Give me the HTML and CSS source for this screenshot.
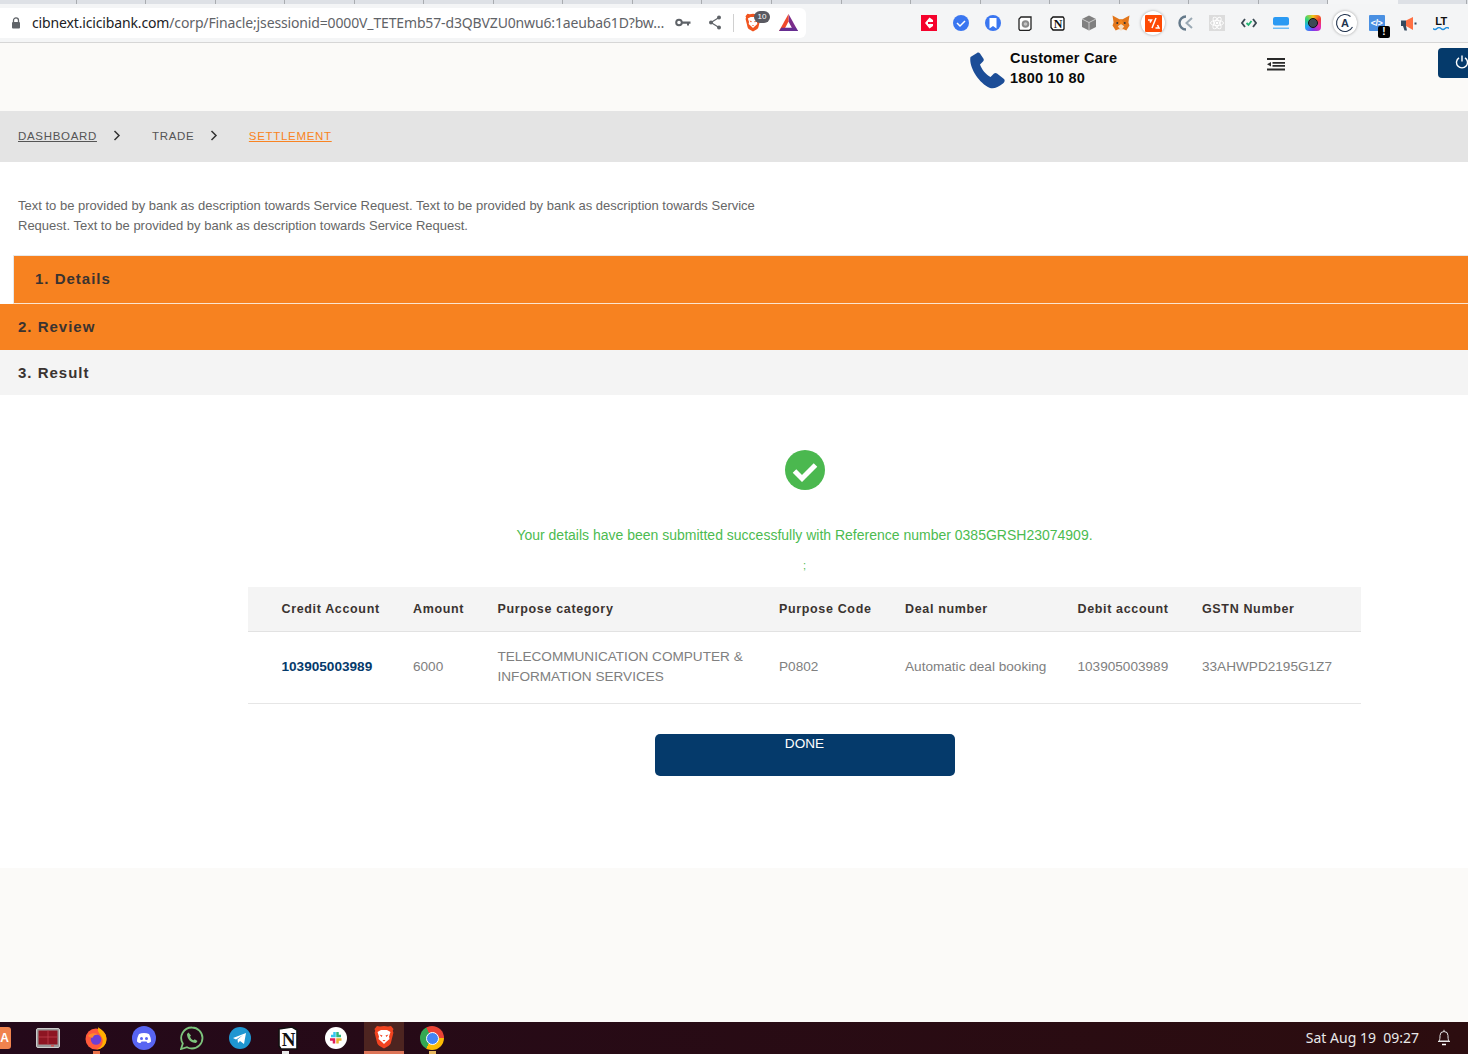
FILE: index.html
```html
<!DOCTYPE html>
<html lang="en">
<head>
<meta charset="utf-8">
<title>Settlement</title>
<link rel="stylesheet" href="styles.css">
</head>
<body>
<div class="screen">
  <div class="tabstrip">
    <i class="tab first"></i><i class="tab"></i><i class="tab"></i><i class="tab"></i><i class="tab"></i><i class="tab"></i><i class="tab"></i><i class="tab"></i><i class="tab"></i><i class="tab"></i><i class="tab"></i><i class="tab"></i><i class="tab"></i><i class="tab"></i><i class="tab"></i><i class="tab"></i><i class="tab"></i><i class="tab"></i><i class="tab"></i><i class="tab active"></i><i class="tab"></i>
  </div>
  <div class="toolbar">
    <div class="omnibox">
      <svg class="lock" width="10" height="12" viewBox="0 0 10 12"><path d="M2.500 5V3.400a2.500 2.500 0 0 1 5 0V5" fill="none" stroke="#5f6368" stroke-width="1.300"/><rect x="1" y="5" width="8" height="6.500" rx="1" fill="#5f6368"/></svg>
      <div class="url"><span class="host">cibnext.icicibank.com</span>/corp/Finacle;jsessionid=0000V_TETEmb57-d3QBVZU0nwu6:1aeuba61D?bw…</div>
      <svg class="key" width="16" height="9" viewBox="0 0 16 9"><circle cx="4" cy="4.500" r="2.800" fill="none" stroke="#5f6368" stroke-width="2"/><path d="M7 3.400h8.500v2.400H14v1.600h-2V5.800H7z" fill="#5f6368"/></svg>
      <svg class="share" width="14" height="15" viewBox="0 0 14 15"><path d="M11 2.500 3 7.500l8 5" fill="none" stroke="#5f6368" stroke-width="1.200"/><circle cx="11" cy="2.500" r="2" fill="#5f6368"/><circle cx="3" cy="7.500" r="2" fill="#5f6368"/><circle cx="11" cy="12.500" r="2" fill="#5f6368"/></svg>
      <span class="omni-sep"></span>
      <div class="brave-wrap">
        <svg width="16" height="19" viewBox="0 0 20 24"><path d="M10 1 14 1.500l3-.5 2.500 3-.7 1.700.6 2-2.500 10c-.3 1.500-1.200 2.300-2.500 3.200L10 23.500l-4.400-2.600c-1.300-.9-2.200-1.700-2.500-3.200L.6 7.700l.6-2L.5 4 3 1l3 .5z" fill="#f1541f"/><path d="M3.500 7 7 5h6l3.500 2-1.500 4.500.5 2.500L12 17l-2 2-2-2-3.500-3 .5-2.500z" fill="#fff"/><path d="M5.500 9.500 8.500 10.500 7.500 12zM14.500 9.500 11.500 10.500 12.500 12zM8.500 15h3L10 16.500z" fill="#f1541f"/></svg>
        <span class="count">10</span>
      </div>
      <svg class="tri" width="19" height="17" viewBox="0 0 19 17"><path d="M9.500 0 19 17h-4.500L9.500 7.500z" fill="#7b2d8b"/><path d="M9.500 0 0 17h4.500L9.500 7.500z" fill="#f0482c"/><path d="M0 17h19l-2.300-3.300H2.300z" fill="#662d91"/></svg>
    </div>
    <div class="exts">
      <span class="ext"><svg width="16" height="16" viewBox="0 0 16 16"><rect width="16" height="16" fill="#f5022c"/><path d="M8.500 2.500 4 8l4.500 5.500 3.500-2.500v-2H9.500L8 8l1.500-1H12V5z" fill="#fff"/><path d="M7 7h2v2H7z" fill="#f5022c"/></svg></span>
      <span class="ext"><svg width="16" height="16" viewBox="0 0 16 16"><circle cx="8" cy="8" r="8" fill="#3a76f0"/><path d="m4 8 3 3 5-5" fill="none" stroke="#fff" stroke-width="1.500"/></svg></span>
      <span class="ext"><svg width="16" height="16" viewBox="0 0 16 16"><circle cx="8" cy="8" r="8" fill="#3a76f0"/><path d="M4.500 3h7v10.500L8 11l-3.500 2.500z" fill="#fff"/></svg></span>
      <span class="ext"><svg width="14" height="15" viewBox="0 0 14 15"><path d="M3 1h10v12l-2 1.500H2L1 13V3z" fill="#fff" stroke="#222" stroke-width="1.300"/><circle cx="7.500" cy="8" r="3.800" fill="#8a8a8a"/><circle cx="7.500" cy="8" r="1.800" fill="#c4c4c4"/></svg></span>
      <span class="ext"><svg width="15" height="15" viewBox="0 0 15 15"><path d="M3 1h10l1 1.500V13l-1 1H3l-2-2.500V3z" fill="#fff" stroke="#111" stroke-width="1.300"/><text x="8" y="11.500" class="svg-n">N</text></svg></span>
      <span class="ext"><svg width="16" height="16" viewBox="0 0 16 16"><path d="m8 .5 7 3.500v8l-7 3.500L1 12V4z" fill="#808080"/><path d="M1 4l7 3.500L15 4M8 7.500v8" fill="none" stroke="#dcdcdc" stroke-width=".8"/></svg></span>
      <span class="ext"><svg width="18" height="17" viewBox="0 0 17 16"><path d="M.5.500 7 4h3L16.500.500l-1 6.500 1 3-3 4.500-2.500-1H6l-2.500 1-3-4.500 1-3z" fill="#e2761b"/><path d="M5.500 10.500 8.500 15l3-4.500-3-2z" fill="#f6dcc0"/><path d="M8.500 4 5 9l3.500-.5L12 9z" fill="#f6851b"/><circle cx="5" cy="7.500" r="1" fill="#333"/><circle cx="12" cy="7.500" r="1" fill="#333"/></svg></span>
      <span class="ext halo"><svg width="17" height="17" viewBox="0 0 17 17"><rect width="17" height="17" rx="1" fill="#fe4a04"/><path d="M3 5h3.500L5 7.500M11 3 7 13M10.500 13H14l-1.500-3" fill="none" stroke="#fff" stroke-width="1.500"/></svg></span>
      <span class="ext"><svg width="15" height="16" viewBox="0 0 15 16"><path d="M8 1.500a6.500 6.500 0 0 0 0 13" fill="none" stroke="#64798a" stroke-width="2.400"/><path d="M14 3 8.500 8l5.500 5" fill="none" stroke="#9aa9b4" stroke-width="2"/></svg></span>
      <span class="ext"><svg width="16" height="16" viewBox="0 0 16 16"><rect width="16" height="16" fill="#dcdcdc"/><g fill="none" stroke="#fff" stroke-width=".9"><ellipse cx="8" cy="8" rx="6.500" ry="2.600"/><ellipse cx="8" cy="8" rx="6.500" ry="2.600" transform="rotate(60 8 8)"/><ellipse cx="8" cy="8" rx="6.500" ry="2.600" transform="rotate(120 8 8)"/></g><circle cx="8" cy="8" r="1.300" fill="#fff"/></svg></span>
      <span class="ext"><svg width="16" height="10" viewBox="0 0 16 10"><path d="M4 1 1 5l3 4M12 1l3 4-3 4" fill="none" stroke="#3c4a54" stroke-width="1.800"/><path d="m5.500 5 2 2 3-4" fill="none" stroke="#22b573" stroke-width="1.800"/></svg></span>
      <span class="ext"><svg width="16" height="12" viewBox="0 0 16 12"><rect width="16" height="8.500" rx="2" fill="#2b9af3"/><rect y="10.500" width="16" height="1.500" fill="#6cbcf7"/></svg></span>
      <span class="ext"><span class="rainbow"><span class="lens"></span></span></span>
      <span class="ext halo"><svg width="20" height="20" viewBox="0 0 20 20"><path d="M15.500 3.500A8.500 8.500 0 1 0 17.500 14" fill="none" stroke="#22344f" stroke-width="1.100"/><text x="10" y="14" class="svg-a">A</text></svg></span>
      <span class="ext"><span class="devbox">&lt;/&gt;</span><span class="warn">!</span></span>
      <span class="ext"><svg width="16" height="15" viewBox="0 0 16 15"><path d="M0 4.500h5V10H0z" fill="#34495e"/><path d="M2 10h3l1 4.500H3.500z" fill="#34495e"/><path d="M5 4.500 12 1v13L5 10z" fill="#ff7043"/><rect x="13.500" y="6.500" width="2" height="2" fill="#34495e"/></svg></span>
      <span class="ext lt"><span class="lt-t">LT</span><svg width="16" height="4" viewBox="0 0 16 4"><path d="M0 1.500q2 2 4 0t4 0 4 0 4 0" fill="none" stroke="#1f8fe0" stroke-width="1.400"/></svg></span>
      <span class="ext dots"><i></i><i></i></span>
    </div>
  </div>

  <header class="site-head">
    <svg class="phone" width="37" height="37" viewBox="0 0 37 37"><path d="M8 1 1.500 5C-.5 14 9 31 21 36c4 1 8-.5 13-4.500 2-1.800 2-3.500 1-4.500L28 21.500c-1-.8-2-.8-3 0l-3.500 3.500C17 23 12.500 17 11 12.500L14 9.500c.8-.8 1-1.800.5-2.800L11 1.500C10 .3 9 .3 8 1z" fill="#1c4d97"/></svg>
    <div class="care"><div>Customer Care</div><div>1800 10 80</div></div>
    <svg class="menu" width="18" height="14" viewBox="0 0 18 14"><path d="M0 1h18v2H0zM5.500 5H18v1.800H5.500zM5.500 8H18v1.800H5.500zM0 11.500h18v2H0z" fill="#2a2a2a"/><path d="M0 7.300 4 5v4.600z" fill="#2a2a2a"/></svg>
    <div class="power"><svg width="14" height="14" viewBox="0 0 14 14"><path d="M4 2.800a5.500 5.500 0 1 0 6 0" fill="none" stroke="#fff" stroke-width="1.400"/><path d="M7 .5v6" stroke="#fff" stroke-width="1.400"/></svg></div>
  </header>

  <nav class="crumbs">
    <a class="crumb link w-a">DASHBOARD</a>
    <svg class="chev" width="8" height="11" viewBox="0 0 8 11"><path d="m1.500 1 4.500 4.500L1.500 10" fill="none" stroke="#333" stroke-width="1.500"/></svg>
    <span class="crumb w-b">TRADE</span>
    <svg class="chev" width="8" height="11" viewBox="0 0 8 11"><path d="m1.500 1 4.500 4.500L1.500 10" fill="none" stroke="#333" stroke-width="1.500"/></svg>
    <a class="crumb link current">SETTLEMENT</a>
  </nav>

  <main class="content">
    <p class="intro">Text to be provided by bank as description towards Service Request. Text to be provided by bank as description towards Service Request. Text to be provided by bank as description towards Service Request.</p>
    <div class="step step-one">1. Details</div>
    <div class="step step-two">2. Review</div>
    <div class="step step-three">3. Result</div>

    <section class="result">
      <svg class="ok" width="40" height="40" viewBox="0 0 40 40"><circle cx="20" cy="20" r="20" fill="#4bb84f"/><path d="m9.500 21 7.500 7.500L30.500 15" fill="none" stroke="#fff" stroke-width="5"/></svg>
      <p class="msg">Your details have been submitted successfully with Reference number 0385GRSH23074909.</p>
      <p class="semi">;</p>
      <table class="grid">
        <colgroup>
          <col class="c1"><col class="c2"><col class="c3"><col class="c4"><col class="c5"><col class="c6"><col class="c7">
        </colgroup>
        <thead>
          <tr><th>Credit Account</th><th>Amount</th><th>Purpose category</th><th>Purpose Code</th><th>Deal number</th><th>Debit account</th><th>GSTN Number</th></tr>
        </thead>
        <tbody>
          <tr><td class="acct">103905003989</td><td>6000</td><td>TELECOMMUNICATION COMPUTER &amp; INFORMATION SERVICES</td><td>P0802</td><td>Automatic deal booking</td><td>103905003989</td><td>33AHWPD2195G1Z7</td></tr>
        </tbody>
      </table>
      <button class="done">DONE</button>
    </section>
  </main>

  <div class="page-foot"></div>

  <footer class="taskbar">
    <div class="apps">
      <span class="app app-cut"><span class="soft">A</span></span>
      <span class="app"><svg width="24" height="20" viewBox="0 0 24 20"><rect x=".5" y=".5" width="23" height="19" rx="1.500" fill="#9a9a9a" stroke="#ccc"/><rect x="2.500" y="2.500" width="19" height="14" fill="#8d1522"/><path d="M2.500 9h19M12 2.500v14" stroke="#c0404c" stroke-width=".8"/><rect x="15" y="17.400" width="3" height="1" fill="#e33"/></svg></span>
      <span class="app"><svg width="22" height="24" viewBox="0 0 22 24"><circle cx="11" cy="13" r="10.500" fill="#ff5a3c"/><path d="M13 1c4 3 8.500 6 8.500 12 0 6-4.500 10.500-10.500 10.500 5-1.500 7.500-6 6.500-10.500-.7-3-3.500-5-4.500-8 0-1.500 0-3 .5-4z" fill="#ffb000"/><circle cx="11" cy="13.500" r="5.200" fill="#6b3fd4"/><path d="M3 10c2-3 7-3.500 10-1.500-3 0-5 1-5 3-2 .5-4-.5-5-1.500z" fill="#ff8a2c"/></svg><i class="dot orange"></i></span>
      <span class="app"><svg width="24" height="24" viewBox="0 0 24 24"><circle cx="12" cy="12" r="12" fill="#5865f2"/><path d="M7 8c3-1.500 7-1.500 10 0 1.500 2.500 2 5 2 7.500-1 1-2.500 1.500-3.500 1.500l-1-1.500h-5L8.500 17c-1 0-2.500-.5-3.500-1.500C5 13 5.500 10.500 7 8z" fill="#fff"/><circle cx="9.500" cy="12.500" r="1.500" fill="#5865f2"/><circle cx="14.500" cy="12.500" r="1.500" fill="#5865f2"/></svg></span>
      <span class="app"><svg width="24" height="24" viewBox="0 0 24 24"><path d="M12 1.500a10.500 10.500 0 0 1 0 21c-2 0-3.500-.5-5-1.300L1 23l1.800-5.500A10.500 10.500 0 0 1 12 1.500z" fill="none" stroke="#7dc47c" stroke-width="1.800"/><path d="M8.500 6.500 7 8c0 5 4 9 9 9l1.500-2-2.800-1.800-1.200 1c-1.500-.5-3-2-3.500-3.500l1-1.200z" fill="#7dc47c"/></svg></span>
      <span class="app"><svg width="22" height="22" viewBox="0 0 22 22"><circle cx="11" cy="11" r="11" fill="#1f96d1"/><path d="M4 11 17 6l-2 11-4-3-2 2-.5-3.500L14 8l-7 4.500z" fill="#fff"/></svg></span>
      <span class="app"><svg width="20" height="24" viewBox="0 0 20 24"><path d="M1 3 14 1l5 3v19H3l-2-3z" fill="#fff" stroke="#111" stroke-width="1.600"/><text x="10.500" y="20" class="svg-bign">N</text></svg><i class="dot white"></i></span>
      <span class="app"><svg width="22" height="22" viewBox="0 0 22 22"><circle cx="11" cy="11" r="11" fill="#fff"/><path d="M9.500 5v4H6" stroke="#36c5f0" stroke-width="2.500" fill="none"/><path d="M12.500 5v4h3.500" stroke="#2eb67d" stroke-width="2.500" fill="none"/><path d="M5 12.500h4v4" stroke="#e01e5a" stroke-width="2.500" fill="none"/><path d="M16.500 12.500h-4v4" stroke="#ecb22e" stroke-width="2.500" fill="none"/></svg></span>
      <span class="app app-on"><svg width="20" height="24" viewBox="0 0 20 24"><path d="M10 1 14 1.500l3-.5 2.500 3-.7 1.700.6 2-2.500 10c-.3 1.500-1.200 2.300-2.500 3.200L10 23.500l-4.400-2.600c-1.300-.9-2.200-1.700-2.500-3.200L.6 7.700l.6-2L.5 4 3 1l3 .5z" fill="#f1431f"/><path d="M3.500 7 7 5h6l3.500 2-1.500 4.500.5 2.500L12 17l-2 2-2-2-3.500-3 .5-2.500z" fill="#fff"/><path d="M5.500 9.500 8.500 10.500 7.500 12zM14.500 9.500 11.500 10.500 12.500 12zM8.500 15h3L10 16.500z" fill="#f1431f"/></svg></span>
      <span class="app"><span class="chrome"><span class="chrome-in"></span></span><i class="dot amber"></i></span>
    </div>
    <div class="tray">
      <span class="clock">Sat Aug 19&nbsp; 09:27</span>
      <svg width="14" height="17" viewBox="0 0 14 17"><path d="M7 .8v1.200M2 12c1-1.500 1-3.500 1-5.500a4 4 0 0 1 8 0c0 2 0 4 1 5.500z" fill="none" stroke="#e8e8e8" stroke-width="1"/><path d="M1 12.500h12" stroke="#e8e8e8" stroke-width="1"/><path d="M5 15.500h4" stroke="#fff" stroke-width="1.500"/></svg>
    </div>
  </footer>
</div>
</body>
</html>
```
FILE: styles.css
```css
* { box-sizing: border-box; }
html, body { margin: 0; padding: 0; }
body { font-family: "Liberation Sans", Arial, sans-serif; background: #fff; overflow: hidden; }
.screen { width: 1468px; height: 1054px; display: flex; flex-direction: column; overflow: hidden; }

/* Browser chrome */
.tabstrip { height: 4px; background: #dee1e6; display: flex; flex: none; }
.tab { display: block; flex: none; width: 69.55px; border-right: 1px solid #a9acb0; }
.tab.first { width: 76.5px; }
.tab.active { background: #f5f6f7; border-right: 0; }
.toolbar { height: 39px; flex: none; background: #f4f5f6; border-bottom: 1px solid #d6d6d6; display: flex; align-items: center; }
.omnibox { width: 806px; height: 30px; background: #fff; border-radius: 0 6px 6px 0; display: flex; align-items: center; flex: none; padding-left: 11px; margin-top: -1px; }
.lock { flex: none; }
.url { font-family: "Noto Sans", sans-serif; font-size: 14px; color: #5f6368; margin-left: 11px; width: 632px; white-space: nowrap; flex: none; letter-spacing: -0.145px; }
.host { color: #202124; }
.key { margin-left: 11px; flex: none; }
.share { margin-left: 17px; flex: none; }
.omni-sep { width: 1px; height: 18px; background: #d0d0d0; margin-left: 11px; flex: none; }
.brave-wrap { position: relative; display: flex; margin-left: 11px; width: 24px; flex: none; }
.count { position: absolute; left: 9px; top: -2px; width: 16px; height: 12px; border-radius: 6px; background: #5a5a62; color: #fff; font-size: 8px; line-height: 12px; text-align: center; }
.tri { margin-left: 10px; flex: none; }
.exts { display: flex; margin-left: 107px; flex: none; }
.ext { width: 32px; height: 32px; display: flex; flex-direction: column; align-items: center; justify-content: center; position: relative; flex: none; }
.halo::before { content: ""; position: absolute; left: 4px; top: 4px; width: 24px; height: 24px; border-radius: 50%; background: #fff; box-shadow: 0 0 3px rgba(0,0,0,.35); }
.halo svg { position: relative; }
.svg-n { font: 700 12px "Liberation Serif", serif; text-anchor: middle; fill: #111; }
.svg-bign { font: 700 19px "Liberation Serif", serif; text-anchor: middle; fill: #111; }
.svg-a { font: 700 11px "Liberation Sans", sans-serif; text-anchor: middle; fill: #22344f; }
.rainbow { width: 16px; height: 16px; border-radius: 4px; background: conic-gradient(#f5c518, #f0412f, #e52bb6, #7a3df0, #1fa8f5, #2ed47a, #f5c518); display: flex; align-items: center; justify-content: center; }
.lens { width: 10px; height: 10px; border-radius: 50%; background: #3d4a55; border: 1px solid #111; }
.devbox { width: 16px; height: 16px; border-radius: 1px; background: #4a90e2; color: #fff; font-size: 9px; font-weight: 700; line-height: 16px; text-align: center; margin: -1px 0 0 -1px; letter-spacing: -0.5px; }
.warn { position: absolute; left: 17px; top: 19px; width: 12px; height: 12px; border-radius: 2px; background: #000; color: #fff; font-size: 10px; font-weight: 700; line-height: 12px; text-align: center; }
.lt-t { font-size: 11px; font-weight: 700; line-height: 10px; color: #111; letter-spacing: -0.5px; }
.lt svg { margin-top: 1px; }
.dots { gap: 3px; align-items: flex-start; padding-left: 11px; }
.dots i { width: 3px; height: 3px; background: #555; display: block; }

/* Site header */
.site-head { height: 68px; flex: none; background: #fbfaf8; display: flex; align-items: flex-start; padding-left: 969px; position: relative; }
.phone { margin-top: 9px; flex: none; }
.care { margin-left: 4px; margin-top: 5px; font-size: 14.5px; font-weight: 700; line-height: 20px; color: #0a0a0a; width: 257px; flex: none; letter-spacing: .25px; }
.menu { margin-top: 14px; flex: none; }
.power { margin-left: 153px; margin-top: 5px; width: 40px; height: 30px; background: #053a6b; border-radius: 4px 0 0 4px; flex: none; padding: 7px 0 0 17px; display: flex; align-items: flex-start; }

/* Breadcrumb */
.crumbs { height: 51px; flex: none; background: #e4e4e4; display: flex; align-items: center; padding: 0 0 2px 18px; }
.crumb { font-size: 11.5px; letter-spacing: .68px; color: #555; white-space: nowrap; }
.link { text-decoration: underline; }
.chev { flex: none; }
.w-a { margin-right: 16px; }
.w-b { margin: 0 16px 0 31px; }
.current { margin-left: 30.5px; color: #f98321; }

/* Content */
.content { height: 706px; flex: none; background: #fff; display: flex; flex-direction: column; }
.intro { margin: 34px 0 19px 18px; width: 745px; font-size: 13px; line-height: 20px; color: #666; }
.step { font-size: 15px; font-weight: 700; letter-spacing: 1px; color: #3a3330; display: flex; align-items: center; flex: none; }
.step-one { margin-left: 13px; height: 49px; background: #f78220; border-top: 1px solid #e8e8e8; border-left: 1px solid #e8e8e8; border-bottom: 1px solid #fbe5d0; padding: 0 0 2px 21px; }
.step-two { height: 46px; background: #f78220; padding: 0 0 1px 18px; }
.step-three { height: 45px; background: #f4f4f4; padding-left: 18px; }

.result { display: flex; flex-direction: column; align-items: center; flex: 1; width: 1113px; margin-left: 248px; }
.ok { margin-top: 55px; flex: none; }
.msg { margin: 35px 0 0; font-size: 14px; line-height: 20px; color: #4cbb50; white-space: nowrap; }
.semi { margin: 10px 0 0; font-size: 11px; line-height: 20px; color: #4cbb50; }
.grid { width: 1113px; table-layout: fixed; border-collapse: collapse; margin-top: 12px; }
.c1 { width: 165px; } .c2 { width: 84.5px; } .c3 { width: 281.5px; } .c4 { width: 126px; } .c5 { width: 172.5px; } .c6 { width: 124.5px; } .c7 { width: 159px; }
.grid th { height: 44px; background: #f4f4f4; border-bottom: 1px solid #e2e2e2; text-align: left; font-size: 12.5px; font-weight: 700; letter-spacing: .65px; color: #3a3330; padding: 0; white-space: nowrap; }
.grid td { height: 72px; border-bottom: 1px solid #e6e6e6; font-size: 13.6px; line-height: 20px; color: #808080; padding: 0 30px 0 0; white-space: normal; }
.grid td:nth-child(5), .grid td:nth-child(6), .grid td:nth-child(7), .grid td:nth-child(1) { padding-right: 0; white-space: nowrap; }
.grid th:first-child, .grid td:first-child { padding-left: 33.5px; }
.grid td.acct { color: #053a6b; font-weight: 700; }
.done { margin-top: 30px; width: 300px; height: 42px; background: #053a6b; border: 0; border-radius: 5px; color: #fff; font: 13.6px "Liberation Sans", sans-serif; line-height: 18px; padding: 0 0 22px; flex: none; }

.page-foot { height: 154px; flex: none; background: #fbfaf8; }

/* Desktop taskbar */
.taskbar { height: 32px; flex: none; background: linear-gradient(90deg, #24091a, #2c0d0f); display: flex; justify-content: space-between; align-items: center; }
.apps { display: flex; align-items: center; height: 32px; margin-left: -24px; }
.app { width: 48px; height: 32px; display: flex; align-items: center; justify-content: center; position: relative; flex: none; }
.app-on { background: #4d2420; border-bottom: 3px solid #dd7558; width: 40px; margin: 0 4px; }
.soft { width: 23px; height: 22px; margin-left: -1px; background: #f0834e; color: #fff; font-size: 12px; font-weight: 700; line-height: 22px; text-align: right; padding-right: 2px; border-radius: 3px; }
.chrome { width: 24px; height: 24px; border-radius: 50%; background: conic-gradient(from -30deg, #ea4335 0 120deg, #fbbc05 120deg 240deg, #34a853 240deg 360deg); display: flex; align-items: center; justify-content: center; }
.chrome-in { width: 11px; height: 11px; border-radius: 50%; background: #4285f4; border: 1.5px solid #fff; box-sizing: content-box; }
.dot { position: absolute; left: 21px; bottom: 0; width: 7px; height: 3px; display: block; }
.orange { background: #e9724a; }
.white { background: #e8e8e8; left: 18px; }
.amber { background: #e8b860; }
.tray { display: flex; align-items: center; gap: 18px; padding: 0 17px 2px 0; }
.clock { font-family: "Noto Sans", sans-serif; font-size: 14px; color: #e8e8e8; white-space: nowrap; }
```
